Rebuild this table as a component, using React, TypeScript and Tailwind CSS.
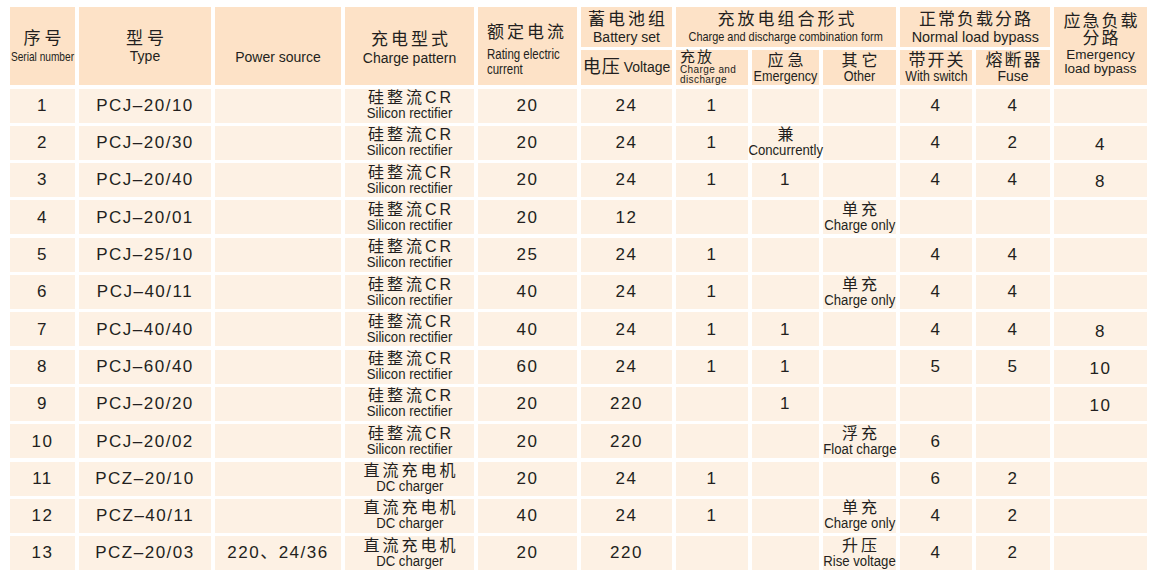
import React from 'react';

const HEAD = 'bg-[#fde2c7]';
const BODY = 'bg-[#fdf1e4]';

type Val = string | [string, string] | null;

interface Row {
  no: string;
  type: string;
  power?: string;
  pattern: [string, string];
  current: string;
  voltage: string;
  charge: Val;
  emergency: Val;
  other: Val;
  sw: Val;
  fuse: Val;
  bypass: Val;
}

const SI: [string, string] = ['硅整流CR', 'Silicon rectifier'];
const DC: [string, string] = ['直流充电机', 'DC charger'];

const rows: Row[] = [
  { no: '1', type: 'PCJ–20/10', pattern: SI, current: '20', voltage: '24', charge: '1', emergency: null, other: null, sw: '4', fuse: '4', bypass: null },
  { no: '2', type: 'PCJ–20/30', pattern: SI, current: '20', voltage: '24', charge: '1', emergency: ['兼', 'Concurrently'], other: null, sw: '4', fuse: '2', bypass: '4' },
  { no: '3', type: 'PCJ–20/40', pattern: SI, current: '20', voltage: '24', charge: '1', emergency: '1', other: null, sw: '4', fuse: '4', bypass: '8' },
  { no: '4', type: 'PCJ–20/01', pattern: SI, current: '20', voltage: '12', charge: null, emergency: null, other: ['单充', 'Charge only'], sw: null, fuse: null, bypass: null },
  { no: '5', type: 'PCJ–25/10', pattern: SI, current: '25', voltage: '24', charge: '1', emergency: null, other: null, sw: '4', fuse: '4', bypass: null },
  { no: '6', type: 'PCJ–40/11', pattern: SI, current: '40', voltage: '24', charge: '1', emergency: null, other: ['单充', 'Charge only'], sw: '4', fuse: '4', bypass: null },
  { no: '7', type: 'PCJ–40/40', pattern: SI, current: '40', voltage: '24', charge: '1', emergency: '1', other: null, sw: '4', fuse: '4', bypass: '8' },
  { no: '8', type: 'PCJ–60/40', pattern: SI, current: '60', voltage: '24', charge: '1', emergency: '1', other: null, sw: '5', fuse: '5', bypass: '10' },
  { no: '9', type: 'PCJ–20/20', pattern: SI, current: '20', voltage: '220', charge: null, emergency: '1', other: null, sw: null, fuse: null, bypass: '10' },
  { no: '10', type: 'PCJ–20/02', pattern: SI, current: '20', voltage: '220', charge: null, emergency: null, other: ['浮充', 'Float charge'], sw: '6', fuse: null, bypass: null },
  { no: '11', type: 'PCZ–20/10', pattern: DC, current: '20', voltage: '24', charge: '1', emergency: null, other: null, sw: '6', fuse: '2', bypass: null },
  { no: '12', type: 'PCZ–40/11', pattern: DC, current: '40', voltage: '24', charge: '1', emergency: null, other: ['单充', 'Charge only'], sw: '4', fuse: '2', bypass: null },
  { no: '13', type: 'PCZ–20/03', power: '220、24/36', pattern: DC, current: '20', voltage: '220', charge: null, emergency: null, other: ['升压', 'Rise voltage'], sw: '4', fuse: '2', bypass: null },
];

// the print uses a condensed latin face in places, squeeze it horizontally
const Narrow = ({ text, className = '', scale = 'scale-x-[0.84]', origin = 'origin-center' }: { text: string; className?: string; scale?: string; origin?: string }) => (
  <span className={`block whitespace-nowrap ${scale} ${origin} ${className}`}>{text}</span>
);

const Cell = ({ v, extra = '' }: { v: Val; extra?: string }) => {
  if (!v) return <div className={BODY} />;
  if (typeof v === 'string') {
    return (
      <div className={`${BODY} flex items-center justify-center text-[17px] tracking-[1.5px] ${extra}`}>{v}</div>
    );
  }
  return (
    <div className={`${BODY} flex flex-col items-center justify-center`}>
      <span className="block text-[16px] tracking-[3px] leading-[16px] pl-[3px]">{v[0]}</span>
      <Narrow text={v[1]} scale="scale-x-[0.94]" className="text-[14px] leading-[15px]" />
    </div>
  );
};

export default function App() {
  return (
    <div className="w-[1153px] h-[577px] bg-white overflow-hidden text-[#231f20] font-['Liberation_Sans','Noto_Sans_CJK_SC',sans-serif]">
      <div className="ml-[10px] pt-[7px] grid grid-cols-[65px_132px_126px_129px_99px_91px_72px_67px_73px_72px_74px_93px] grid-rows-[40px_35px_repeat(13,34px)] gap-x-[4px] gap-y-[3.3px]">
        {/* header */}
        <div className={`${HEAD} row-span-2 flex flex-col items-center justify-center`}>
          <span className="text-[17px] tracking-[4px] pl-[4px] leading-[20px]">序号</span>
          <Narrow text="Serial number" scale="scale-x-[0.78]" className="text-[13px] leading-[15px]" />
        </div>
        <div className={`${HEAD} row-span-2 flex flex-col items-center justify-center`}>
          <span className="text-[17px] tracking-[4px] pl-[4px] leading-[20px]">型号</span>
          <span className="text-[14px] leading-[15px]">Type</span>
        </div>
        <div className={`${HEAD} row-span-2 flex items-center justify-center pt-[22px]`}>
          <span className="text-[14px]">Power source</span>
        </div>
        <div className={`${HEAD} row-span-2 flex flex-col items-center justify-center pt-[4px]`}>
          <span className="text-[17px] tracking-[3px] pl-[3px] leading-[20px]">充电型式</span>
          <span className="text-[14px] leading-[16px]">Charge pattern</span>
        </div>
        <div className={`${HEAD} row-span-2 flex flex-col justify-center pl-[9px] pt-[6px]`}>
          <span className="text-[17px] tracking-[3px] leading-[22px] mb-[3px]">额定电流</span>
          <Narrow text="Rating electric" origin="origin-left" scale="scale-x-[0.82]" className="text-[14px] leading-[15px]" />
          <Narrow text="current" origin="origin-left" scale="scale-x-[0.82]" className="text-[14px] leading-[15px]" />
        </div>
        <div className={`${HEAD} flex flex-col items-center justify-center`}>
          <span className="text-[17px] tracking-[3px] pl-[3px] leading-[20px]">蓄电池组</span>
          <span className="text-[14px] leading-[15px]">Battery set</span>
        </div>
        <div className={`${HEAD} col-span-3 flex flex-col items-center justify-center`}>
          <span className="text-[17px] tracking-[3px] pl-[3px] leading-[20px]">充放电组合形式</span>
          <Narrow text="Charge and discharge combination form" scale="scale-x-[0.84]" className="text-[13px] leading-[14px]" />
        </div>
        <div className={`${HEAD} col-span-2 flex flex-col items-center justify-center`}>
          <span className="text-[17px] tracking-[2px] pl-[2px] leading-[20px]">正常负载分路</span>
          <Narrow text="Normal load bypass" scale="scale-x-[0.96]" className="text-[15px] leading-[14px]" />
        </div>
        <div className={`${HEAD} row-span-2 flex flex-col items-center justify-center pb-[4px]`}>
          <span className="text-[17px] tracking-[2px] pl-[2px] leading-[17px]">应急负载</span>
          <span className="text-[17px] tracking-[2px] pl-[2px] leading-[17px]">分路</span>
          <span className="text-[13.5px] leading-[14px] mt-[1px]">Emergency</span>
          <span className="text-[13.5px] leading-[14px]">load bypass</span>
        </div>
        {/* second header row */}
        <div className={`${HEAD} flex items-center justify-center gap-[3px]`}>
          <span className="text-[18px] tracking-[1px]">电压</span>
          <span className="text-[14px]">Voltage</span>
        </div>
        <div className={`${HEAD} flex flex-col justify-center pl-[4px]`}>
          <span className="text-[15px] tracking-[2px] leading-[14px]">充放</span>
          <span className="text-[10px] leading-[11px] tracking-[0.4px]">Charge and</span>
          <span className="text-[10px] leading-[10px] tracking-[0.4px]">discharge</span>
        </div>
        <div className={`${HEAD} flex flex-col items-center justify-center`}>
          <span className="text-[16px] tracking-[4px] pl-[4px] leading-[17px]">应急</span>
          <Narrow text="Emergency" scale="scale-x-[0.9]" className="text-[14px] leading-[15px]" />
        </div>
        <div className={`${HEAD} flex flex-col items-center justify-center`}>
          <span className="text-[16px] tracking-[4px] pl-[4px] leading-[17px]">其它</span>
          <Narrow text="Other" scale="scale-x-[0.9]" className="text-[14px] leading-[15px]" />
        </div>
        <div className={`${HEAD} flex flex-col items-center justify-center`}>
          <span className="text-[17px] tracking-[2px] pl-[2px] leading-[17px]">带开关</span>
          <Narrow text="With switch" scale="scale-x-[0.88]" className="text-[14px] leading-[15px]" />
        </div>
        <div className={`${HEAD} flex flex-col items-center justify-center`}>
          <span className="text-[17px] tracking-[2px] pl-[2px] leading-[17px]">熔断器</span>
          <span className="text-[14px] leading-[15px]">Fuse</span>
        </div>

        {/* body */}
        {rows.map((r) => (
          <React.Fragment key={r.no}>
            <Cell v={r.no} />
            <Cell v={r.type} />
            <Cell v={r.power ?? null} />
            <Cell v={r.pattern} />
            <Cell v={r.current} />
            <Cell v={r.voltage} />
            <Cell v={r.charge} />
            <Cell v={r.emergency} />
            <Cell v={r.other} />
            <Cell v={r.sw} />
            <Cell v={r.fuse} />
            <Cell v={r.bypass} extra="pt-[4px]" />
          </React.Fragment>
        ))}
      </div>
    </div>
  );
}
